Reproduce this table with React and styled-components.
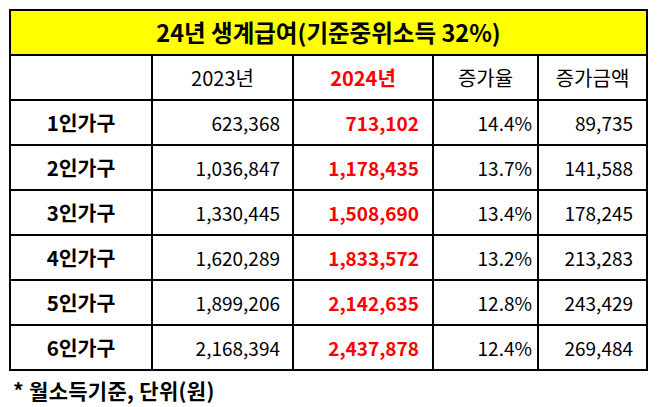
import React from 'react';
import styled, { createGlobalStyle } from 'styled-components';

const GlobalStyle = createGlobalStyle`
  html, body {
    margin: 0;
    padding: 0;
    background: #fff;
  }
  body {
    font-family: "Noto Sans CJK KR", "Noto Sans", sans-serif;
    color: #000;
  }
`;

const Page = styled.div`
  width: 659px;
  height: 407px;
  padding: 9px 0 0 9px;
  box-sizing: border-box;
  overflow: hidden;
`;

const Table = styled.table`
  border-collapse: collapse;
  table-layout: fixed;
  width: 637px;
`;

const Row = styled.tr`
  height: 45px;
`;

const Title = styled.th`
  padding: 0;
  background: #ffff00;
  border: 2px solid #000;
  font-size: 23.5px;
  font-weight: 700;
  text-align: center;
  line-height: 1;
`;

const Head = styled.th`
  padding: 0;
  border: 2px solid #000;
  font-size: 20px;
  font-weight: ${({ $bold }) => ($bold ? 700 : 400)};
  color: ${({ $red }) => ($red ? '#ff0000' : '#000')};
  text-align: center;
  line-height: 1;
`;

const Label = styled.td`
  padding: 0;
  border: 2px solid #000;
  font-size: 20.5px;
  font-weight: 700;
  text-align: center;
  line-height: 1;
`;

const Cell = styled.td`
  padding: 0 ${({ $pad }) => $pad || 12}px 0 0;
  border: 2px solid #000;
  font-size: 19px;
  font-weight: ${({ $bold }) => ($bold ? 700 : 400)};
  color: ${({ $red }) => ($red ? '#ff0000' : '#000')};
  text-align: right;
  line-height: 1;
`;

const Note = styled.p`
  margin: 9px 0 0 4px;
  font-size: 21px;
  font-weight: 700;
  letter-spacing: 0.3px;
  line-height: 1;
`;

const rows = [
  ['1인가구', '623,368', '713,102', '14.4%', '89,735'],
  ['2인가구', '1,036,847', '1,178,435', '13.7%', '141,588'],
  ['3인가구', '1,330,445', '1,508,690', '13.4%', '178,245'],
  ['4인가구', '1,620,289', '1,833,572', '13.2%', '213,283'],
  ['5인가구', '1,899,206', '2,142,635', '12.8%', '243,429'],
  ['6인가구', '2,168,394', '2,437,878', '12.4%', '269,484'],
];

export default function App() {
  return (
    <>
      <GlobalStyle />
      <Page>
        <Table>
          <colgroup>
            <col style={{ width: 142 }} />
            <col style={{ width: 141 }} />
            <col style={{ width: 140 }} />
            <col style={{ width: 105 }} />
            <col style={{ width: 109 }} />
          </colgroup>
          <thead>
            <Row>
              <Title colSpan={5}>24년 생계급여(기준중위소득 32%)</Title>
            </Row>
            <Row>
              <Head />
              <Head>2023년</Head>
              <Head $bold $red>2024년</Head>
              <Head>증가율</Head>
              <Head>증가금액</Head>
            </Row>
          </thead>
          <tbody>
            {rows.map(([label, y23, y24, rate, diff]) => (
              <Row key={label}>
                <Label>{label}</Label>
                <Cell>{y23}</Cell>
                <Cell $bold $red $pad={13}>{y24}</Cell>
                <Cell $pad={5}>{rate}</Cell>
                <Cell $pad={13}>{diff}</Cell>
              </Row>
            ))}
          </tbody>
        </Table>
        <Note>* 월소득기준, 단위(원)</Note>
      </Page>
    </>
  );
}
